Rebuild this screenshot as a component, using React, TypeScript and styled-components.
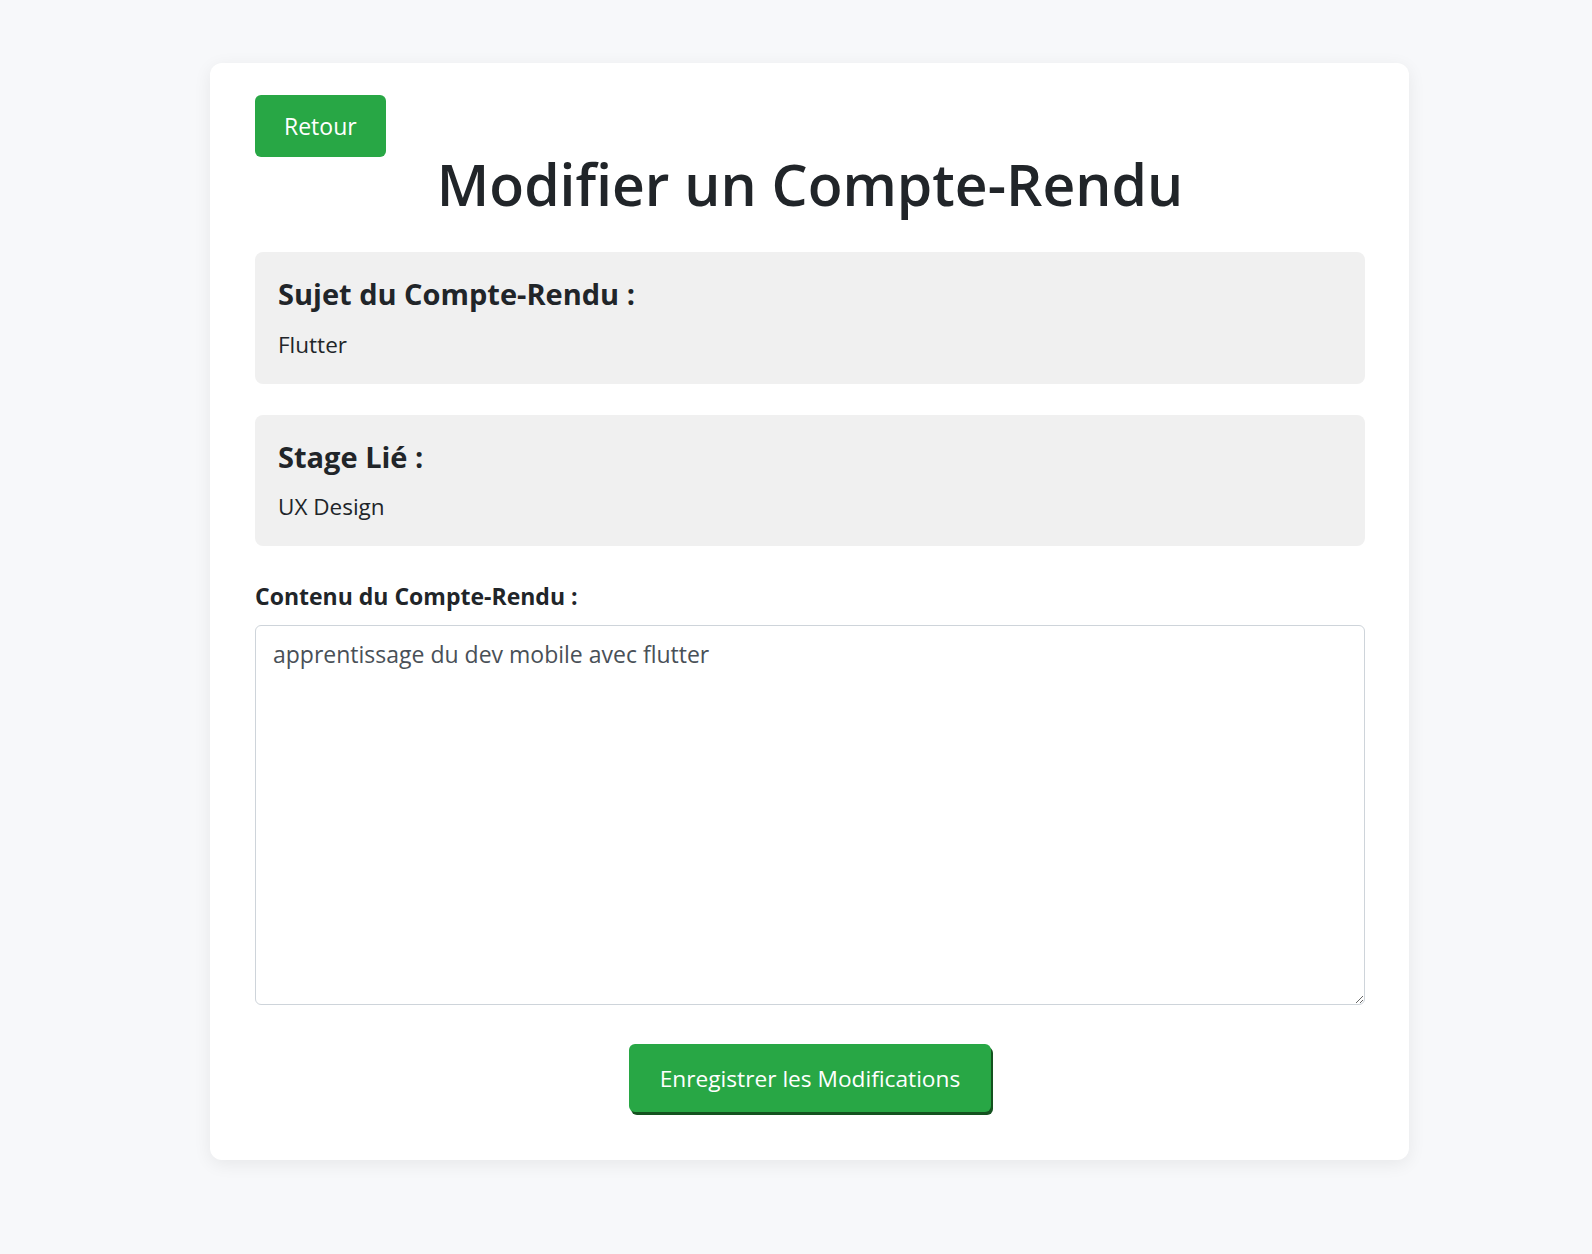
import styled, { createGlobalStyle } from "styled-components";

const GlobalStyle = createGlobalStyle`
  * {
    box-sizing: border-box;
  }

  body {
    margin: 0;
    background-color: #f7f8fa;
    font-family: "Segoe UI", "Open Sans", "Noto Sans", sans-serif;
    color: #212529;
  }
`;

const Page = styled.div`
  min-height: 1254px;
  padding: 63px 0 40px 210px;
`;

const Card = styled.div`
  width: 1199px;
  background-color: #ffffff;
  border-radius: 12px;
  box-shadow: 0 4px 18px rgba(0, 0, 0, 0.07);
  padding: 32px 44px 48px 45px;
`;

const BackButton = styled.button`
  display: block;
  height: 62px;
  padding: 0 29px;
  border: none;
  border-radius: 6px;
  background-color: #28a745;
  color: #ffffff;
  font-family: inherit;
  font-size: 23px;
  cursor: pointer;
`;

const Title = styled.h1`
  margin: -7px 0 34px;
  text-align: center;
  font-size: 57px;
  font-weight: 600;
  line-height: 1.2;
  color: #212529;
`;

const InfoBox = styled.div`
  background-color: #f0f0f0;
  border-radius: 8px;
  padding: 25px 23px 23px;
  margin-bottom: 31px;
`;

const InfoTitle = styled.h3`
  margin: 0 0 17px;
  font-size: 29px;
  font-weight: 700;
  line-height: 1.2;
`;

const InfoValue = styled.p`
  margin: 0;
  font-size: 22.5px;
  line-height: 1.4;
`;

const Label = styled.label`
  display: block;
  margin: 34px 0 13px;
  font-size: 23px;
  font-weight: 700;
  line-height: 1.4;
`;

const ContentArea = styled.textarea`
  display: block;
  width: 100%;
  height: 380px;
  padding: 11px 17px;
  border: 1px solid #ced4da;
  border-radius: 6px;
  font-family: inherit;
  font-size: 23px;
  line-height: 1.5;
  color: #495057;
  resize: vertical;
`;

const Actions = styled.div`
  display: flex;
  justify-content: center;
  margin-top: 39px;
`;

const SaveButton = styled.button`
  height: 68px;
  padding: 0 31px;
  border: none;
  border-radius: 6px;
  background-color: #28a745;
  box-shadow: 2px 3px 0 #14521f;
  color: #ffffff;
  font-family: inherit;
  font-size: 22.7px;
  cursor: pointer;
`;

const infos = [
  { title: "Sujet du Compte-Rendu :", value: "Flutter" },
  { title: "Stage Lié :", value: "UX Design" },
];

export default function App() {
  return (
    <>
      <GlobalStyle />
      <Page>
        <Card>
          <BackButton>Retour</BackButton>
          <Title>Modifier un Compte-Rendu</Title>
          {infos.map((info) => (
            <InfoBox key={info.title}>
              <InfoTitle>{info.title}</InfoTitle>
              <InfoValue>{info.value}</InfoValue>
            </InfoBox>
          ))}
          <Label htmlFor="contenu">Contenu du Compte-Rendu :</Label>
          <ContentArea
            id="contenu"
            defaultValue="apprentissage du dev mobile avec flutter"
          />
          <Actions>
            <SaveButton>Enregistrer les Modifications</SaveButton>
          </Actions>
        </Card>
      </Page>
    </>
  );
}
